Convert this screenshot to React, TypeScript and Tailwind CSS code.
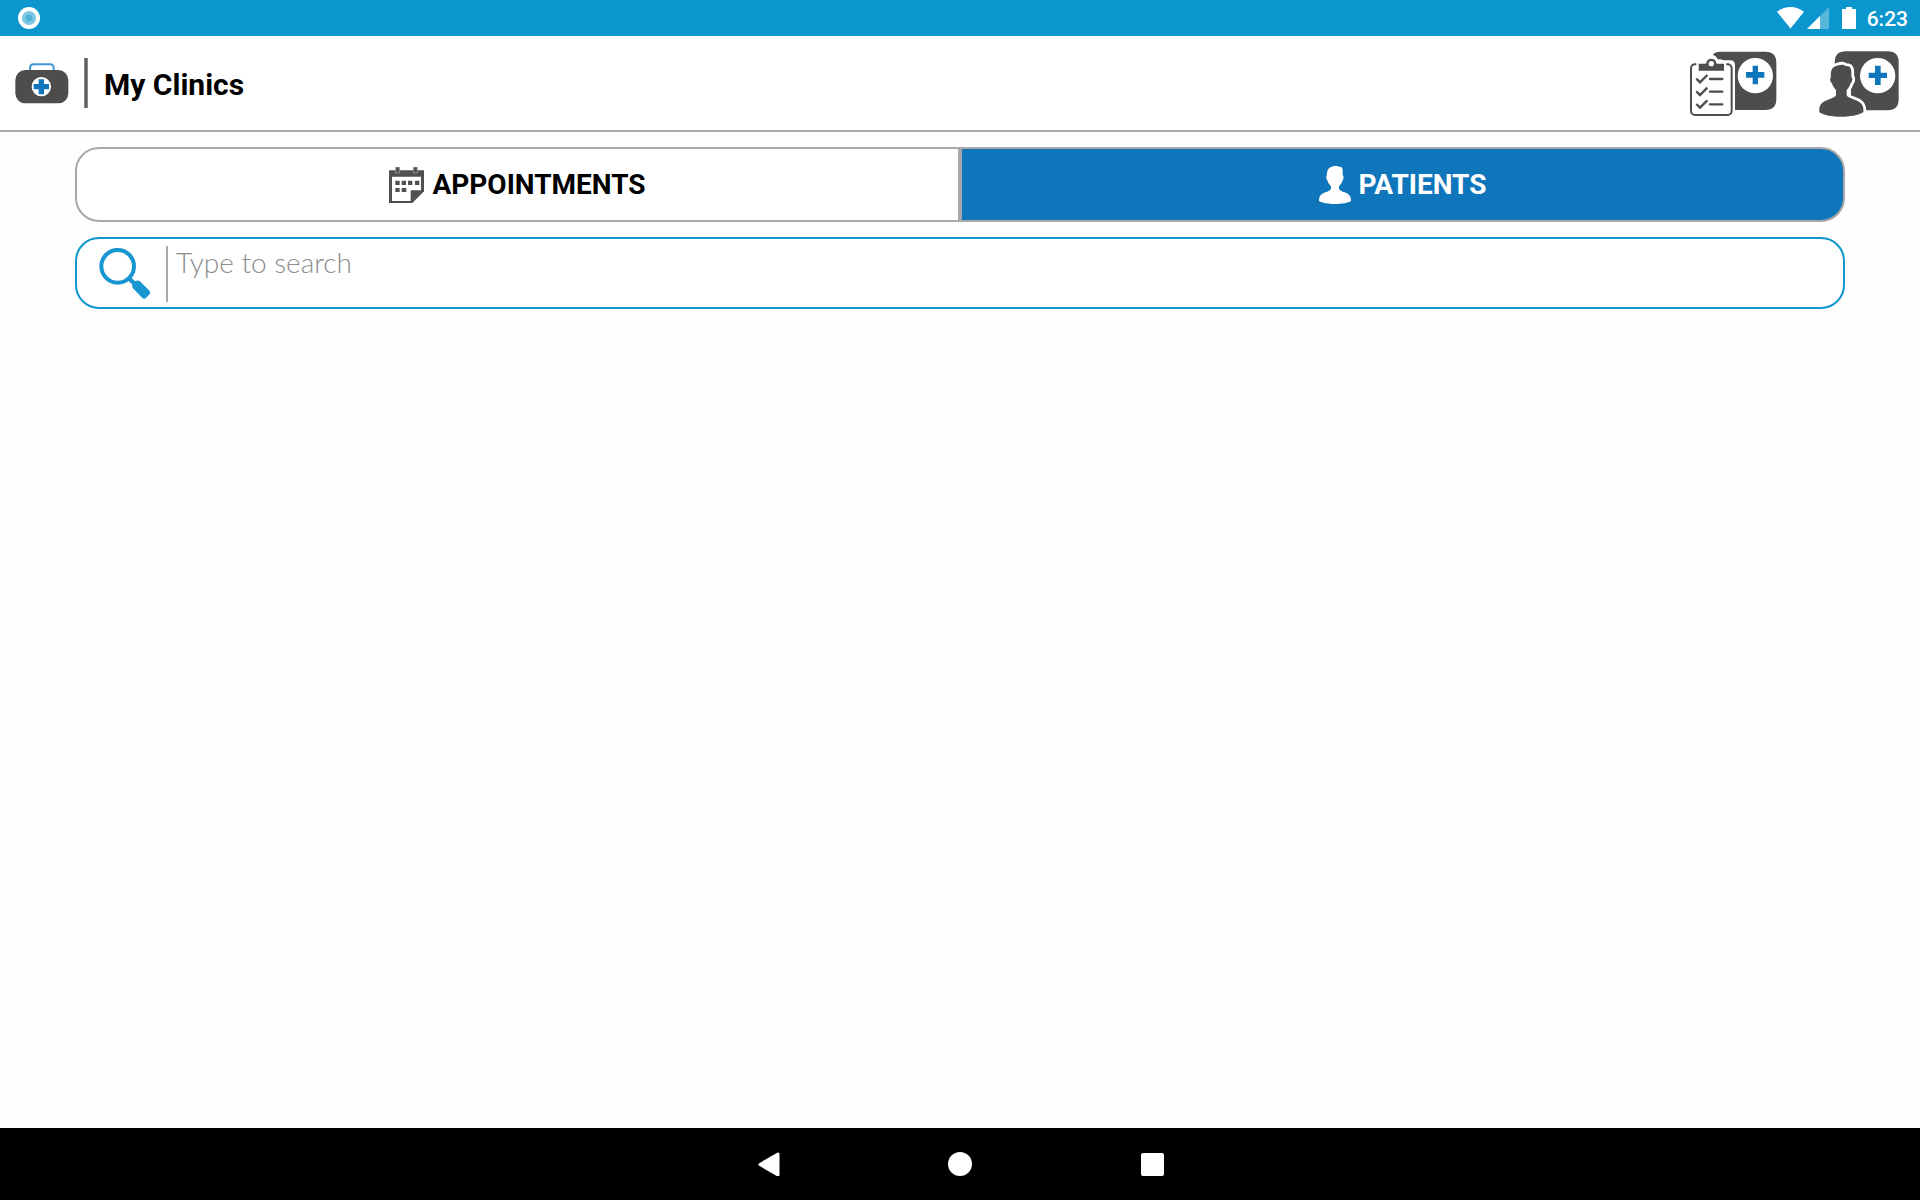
import React from "react";

function StatusBar() {
  return (
    <div className="flex h-9 items-center justify-between bg-[#0b96cd] pl-[18px] pr-3">
      <svg className="size-[22px]" viewBox="0 0 22 22" aria-hidden="true">
        <circle cx="11" cy="11" r="11" fill="#fff" />
        <circle cx="11" cy="11" r="7" fill="#7cc6e3" />
        <circle cx="11" cy="11" r="3.2" fill="#4db1d9" />
      </svg>
      <div className="flex items-center text-white">
        <svg className="h-[22px] w-[27px]" viewBox="0 0 27 22" aria-hidden="true">
          <path d="M13.5 21.5 0 4.8C8-1.6 19-1.6 27 4.8Z" fill="#fff" />
        </svg>
        <svg className="ml-[3px] h-[22px] w-[22px]" viewBox="0 0 22 22" aria-hidden="true">
          <path d="M0 22 22 0v22Z" fill="#58b6dc" />
          <path d="M0 22 13 9V22Z" fill="#fff" />
        </svg>
        <svg className="ml-[13px] h-[22px] w-[14px]" viewBox="0 0 14 22" aria-hidden="true">
          <path d="M4 0h6v2h4v20H0V2h4Z" fill="#fff" />
        </svg>
        <span className="ml-[11px] pt-[2px] font-['Roboto',sans-serif] text-[21px] leading-6 font-medium">6:23</span>
      </div>
    </div>
  );
}

function ClinicBagIcon() {
  return (
    <svg className="h-[42px] w-[54px]" viewBox="45 186 162 126" aria-hidden="true">
      <path d="M90 212v-8q0-11 11-11h49q11 0 11 11v8" fill="none" stroke="#3f98d3" strokeWidth="6" />
      <rect x="46" y="210" width="159" height="100" rx="30" fill="#4d4d4d" />
      <circle cx="124" cy="260" r="29" fill="#fff" />
      <path d="M116 238h16v14h15v16h-15v15h-16v-15h-15v-16h15Z" fill="#1076bc" />
    </svg>
  );
}

function AddAppointmentIcon() {
  return (
    <svg className="h-[67px] w-[87px]" viewBox="60 150 261 201" aria-hidden="true">
      <path d="M128 164q8-9 22-9h136q33 0 33 33v109q0 33-33 33h-91V196q0-15-15-15h-20q-4-3-11-3h-6q-4-11-15-14Z" fill="#4d4d4d" />
      <circle cx="256" cy="227" r="53" fill="#fff" />
      <path d="M248 197h16v19h19v17h-19v20h-16v-20h-20v-17h20Z" fill="#1076bc" />
      <rect x="63" y="193" width="122" height="152" rx="12" fill="#fff" stroke="#4d4d4d" strokeWidth="6" />
      <path d="M79 184h90v28H79Z" fill="#fff" />
      <path d="M86 212v-21h22c2-10 7-15 16-15s14 5 16 15h22v21Z" fill="#4d4d4d" />
      <circle cx="124" cy="191" r="8" fill="#fff" />
      <g fill="none" stroke="#4d4d4d" strokeWidth="7">
        <path d="m79 236 11 11 22-22M79 274l11 11 22-22M79 312l11 11 22-22" />
        <path d="M120 237h37M120 275h37M120 313h37" strokeLinecap="round" />
      </g>
    </svg>
  );
}

const BUST =
  "M484 212c2-10 14-14 22-16 6-3 16-3 21 2l8 1c7 2 9 10 9 18v14c5 3 3 14-2 19-3 10-8 16-12 20v16c6 10 25 12 38 20 12 8 13 20 12 31-30 18-104 18-132 0-1-11 0-23 12-31 13-8 32-10 38-20v-16c-6-6-10-12-12-20-5-4-8-15-3-19-1-7-1-13 1-19Z";

function AddPatientIcon() {
  return (
    <svg className="h-[67px] w-[80px]" viewBox="447 150 240 201" aria-hidden="true">
      <path d="M494 200v-12q0-34 34-34h125q33 0 33 33v111q0 33-33 33h-110V230Z" fill="#4d4d4d" />
      <circle cx="623" cy="227" r="53" fill="#fff" />
      <path d="M615 197h17v21h19v16h-19v21h-17v-21h-19v-16h19Z" fill="#1076bc" />
      <path d={BUST} fill="none" stroke="#fff" strokeWidth="17" strokeLinejoin="round" />
      <path d={BUST} fill="#4d4d4d" />
    </svg>
  );
}

function CalendarIcon() {
  return (
    <svg className="h-9 w-[35px]" viewBox="57 78 105 108" aria-hidden="true">
      <path d="M57 88h105v63l-35 35H57Z" fill="#505050" />
      <path d="M66 107h87v41h-31v32H66Z" fill="#fff" />
      <path d="M77 78h12v18H77ZM130 78h12v18h-12Z" fill="#505050" stroke="#aaa" strokeWidth="2" />
      <path d="M76 119h13v13H76ZM95 119h13v13H95ZM114 119h13v13h-13ZM135 119h13v13h-13ZM76 141h13v12H76ZM95 141h14v12H95Z" fill="#505050" />
    </svg>
  );
}

function PersonIcon() {
  return (
    <svg className="h-[38px] w-8" viewBox="0 0 96 114" aria-hidden="true">
      <path d="M26 13C29 4 38 1 46 0h8c5 2 12 2 15 5 3 5 2 13 2 22 4 3 3 14-1 18-2 7-7 12-10 16v7c5 9 16 9 26 15 9 6 10 13 10 22C78 117 18 117 0 105c0-9 1-16 10-22 10-6 21-6 26-15v-7c-4-4-8-9-10-16-4-4-6-15-2-18-1-6 1-10 2-14Z" fill="#fff" />
    </svg>
  );
}

function SearchIcon() {
  return (
    <svg className="h-[53px] w-[52px]" viewBox="117 324 156 159" aria-hidden="true">
      <circle cx="173" cy="382" r="49" fill="none" stroke="#1896d1" strokeWidth="12" />
      <path d="m205 416 17 17" stroke="#1896d1" strokeWidth="13" />
      <path d="m218 433 8-7q8-4 14 1l29 29q3 5 0 9l-11 12q-6 4-11 0l-28-29q-5-6-1-15Z" fill="#1896d1" />
    </svg>
  );
}

function Header() {
  return (
    <header className="flex h-24 items-center justify-between border-b-2 border-[#a8a8a8] bg-white pl-[15px] pr-[21px]">
      <div className="flex items-center">
        <ClinicBagIcon />
        <div className="ml-[15px] h-[50px] w-1 border-x border-[#8a8a8a] bg-[#5f5f5f]" />
        <h1 className="ml-4 pt-1 text-[30px] leading-9 font-bold text-black">My Clinics</h1>
      </div>
      <div className="flex gap-[42px]">
        <button type="button" aria-label="Add appointment"><AddAppointmentIcon /></button>
        <button type="button" aria-label="Add patient"><AddPatientIcon /></button>
      </div>
    </header>
  );
}

export default function App() {
  return (
    <div className="flex min-h-screen flex-col bg-[#fefefe] font-['Roboto',sans-serif]">
      <StatusBar />
      <Header />
      <main className="flex grow flex-col gap-[15px] px-[75px] pt-[15px]">
        <div role="tablist" className="grid grid-cols-2 text-[28px] leading-9 font-bold">
          <button type="button" role="tab" aria-selected="false" className="flex h-[75px] items-center justify-center gap-2 rounded-l-3xl border-2 border-[#a8a8a8] bg-white text-black">
            <CalendarIcon />
            APPOINTMENTS
          </button>
          <button type="button" role="tab" aria-selected="true" className="flex h-[75px] items-center justify-center gap-2 rounded-r-3xl border-2 border-[#a8a8a8] bg-[#1076bc] text-white">
            <PersonIcon />
            PATIENTS
          </button>
        </div>
        <label className="flex h-[72px] items-center rounded-3xl border-2 border-[#0b96cd] bg-white pt-px pl-[22px] pr-6">
          <SearchIcon />
          <span className="ml-[15px] h-14 w-[2px] bg-[#a8a8a8]" />
          <input type="text" aria-label="Search patients" placeholder="Type to search" className="ml-2 h-14 grow pb-6 font-['Lato',sans-serif] text-[28px] leading-8 font-light text-black outline-none placeholder:text-[#8c8c8c]" />
        </label>
      </main>
      <nav className="flex h-[72px] items-center justify-center gap-[168px] bg-black">
        <button type="button" aria-label="Back">
          <svg className="size-6" viewBox="0 0 24 24"><path d="M4 12.5 22 2v21Z" fill="#fff" stroke="#fff" strokeWidth="3" strokeLinejoin="round" /></svg>
        </button>
        <button type="button" aria-label="Home">
          <svg className="size-6" viewBox="0 0 24 24"><circle cx="12" cy="12" r="12" fill="#fff" /></svg>
        </button>
        <button type="button" aria-label="Recent apps">
          <svg className="size-6" viewBox="0 0 24 24"><rect x="1" y="1" width="23" height="23" rx="2" fill="#fff" /></svg>
        </button>
      </nav>
    </div>
  );
}
